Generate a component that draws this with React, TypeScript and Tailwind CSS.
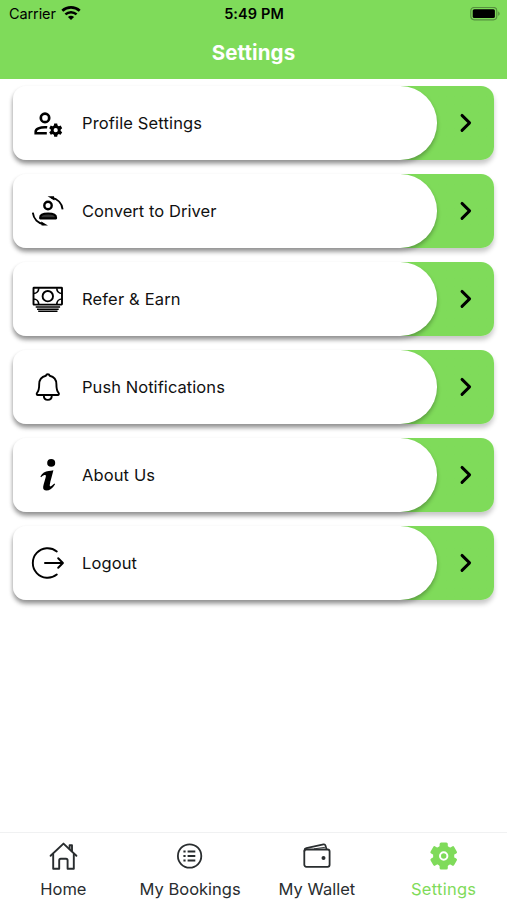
import type { ReactNode } from 'react';

const ProfileIcon = () => (
  <svg width="36" height="36" viewBox="0 0 36 36" fill="none" stroke="black">
    <circle cx="15" cy="12.9" r="4.2" strokeWidth="2.7" />
    <path d="M16.800 28.200H5.700v-1.700c0-2.700 4.300-4.300 9.300-4.300.8 0 1.500 0 2.200.1" strokeWidth="2.600" />
    <circle cx="25.700" cy="25.200" r="3.500" strokeWidth="2.800" />
    <g fill="black" stroke="none">
      <path d="M24.200 18.600h3l.5 3h-4zM24.200 31.800h3l.5-3h-4z" />
      <path d="M24.200 18.600h3l.5 3h-4zM24.200 31.800h3l.5-3h-4z" transform="rotate(60 25.700 25.200)" />
      <path d="M24.200 18.600h3l.5 3h-4zM24.200 31.800h3l.5-3h-4z" transform="rotate(120 25.700 25.200)" />
    </g>
  </svg>
);

const ConvertIcon = () => (
  <svg width="36" height="36" viewBox="0 0 36 36" fill="none" stroke="black">
    <circle cx="18" cy="12.5" r="3.7" strokeWidth="2.4" />
    <path d="M10.2 25.3v-.8c0-2.7 3.6-4 7.900-4s7.900 1.300 7.900 4v.8z" fill="#333" strokeWidth="2.2" strokeLinejoin="round" />
    <path d="M21.5 4.800C27.500 5.800 32 10 32.600 16.300M2.800 19.700C3.600 26 8 30.300 14 31.200" strokeWidth="1.900" />
    <path d="M17.600 3.200 24 3.300 24.400 7.400zM18 32.600l-6.400-.100-.4-4.100z" fill="black" stroke="none" />
  </svg>
);

const CashIcon = () => (
  <svg width="36" height="36" viewBox="0 0 36 36" fill="none" stroke="black">
    <rect x="3.500" y="6.800" width="28.500" height="16.800" rx="0.5" strokeWidth="1.900" />
    <circle cx="17.800" cy="15.200" r="5.200" strokeWidth="1.900" />
    <path d="M3.500 12.500c3 0 5.200-2.400 5.200-5.300M32 12.500c-3 0-5.200-2.400-5.200-5.300M3.500 18c3 0 5.200 2.400 5.200 5.300M32 18c-3 0-5.200 2.400-5.200 5.300" strokeWidth="1.700" />
    <path d="M5.700 26h24.400M7 28.200h21.700M8.200 30.300h19.300" strokeWidth="1.500" />
  </svg>
);

const BellIcon = () => (
  <svg width="36" height="36" viewBox="0 0 36 36" fill="none" stroke="black" strokeWidth="1.900" strokeLinejoin="round">
    <path d="M17.800 5.200c-1 0-1.700.6-1.900 1.500-4.500 1-6.700 4.300-6.700 8.600 0 5.200-.5 6.700-2 8.300-.9 1-.6 2.400.8 2.400h19.600c1.400 0 1.700-1.400.8-2.400-1.500-1.600-2-3.100-2-8.300 0-4.300-2.200-7.600-6.700-8.600-.2-.9-.9-1.500-1.900-1.500z" />
    <path d="M13.800 26.200c0 2.900 1.700 4.700 4 4.700s4-1.800 4-4.700" />
  </svg>
);

const InfoIcon = () => (
  <svg width="36" height="36" viewBox="0 0 36 36" fill="black">
    <ellipse cx="21.2" cy="5.900" rx="4" ry="3.800" />
    <path d="M10.400 19.600c1.800-3.500 4.800-5.200 8.200-5.500 1.600-.1 3.200-.3 4.800-.8-1 4.500-3 10.400-3.600 14.400-.2 1.300.2 1.900 1 1.600 1.300-.5 2.400-1.600 3.600-2.700l.7.6c-2.400 4-5.800 6.300-8.600 6.300-2.400 0-3.800-1.500-3.300-4 .6-3.300 2-6.900 2.600-9.700.4-1.700-.6-2.200-2-1.500-.9.4-1.800 1.100-2.700 2z" />
  </svg>
);

const LogoutIcon = () => (
  <svg width="36" height="36" viewBox="0 0 36 36" fill="none" stroke="black" strokeLinecap="round">
    <path d="M26.800 6.400A14.800 14.800 0 1 0 26.800 29.600" strokeWidth="1.900" />
    <path d="M15 18h17.800M28.200 13.300 32.900 18l-4.700 4.700" strokeWidth="2" strokeLinejoin="round" />
  </svg>
);

const HomeIcon = () => (
  <svg width="30" height="30" viewBox="0 0 30 30" fill="none" stroke="currentColor" strokeWidth="1.900" strokeLinejoin="round" strokeLinecap="round">
    <path d="M2.600 14.800 15.500 2.600 28.400 14.800" />
    <path d="M5.200 13.200v14.600h6v-8.400c0-1 .6-1.700 1.600-1.700h5.200c1 0 1.600.7 1.600 1.700v8.400h6.200V13.200" />
    <path d="M21.600 7.800V4.300h2.400V10" />
  </svg>
);

const BookingsIcon = () => (
  <svg width="30" height="30" viewBox="0 0 30 30" fill="none" stroke="currentColor">
    <circle cx="14.600" cy="15" r="11.700" strokeWidth="1.800" />
    <path d="M12.600 10.500h7.700M12.600 15h7.700M12.600 19.500h7.700" strokeWidth="1.800" />
    <path d="M8.400 10.500h2.200M8.400 15h2.200M8.400 19.500h2.200" strokeWidth="2.200" />
  </svg>
);

const WalletIcon = () => (
  <svg width="30" height="30" viewBox="0 0 30 30" fill="none" stroke="currentColor" strokeWidth="1.800" strokeLinejoin="round">
    <rect x="2.300" y="8.500" width="25.300" height="17.300" rx="2" />
    <path d="M2.400 10.500V9.300c0-1.200.7-1.900 1.900-2.200L21.500 3.400c1.100-.2 1.700.2 2 1.200l1.100 3.700" strokeWidth="1.600" />
    <path d="M12 7.900 23.500 6.200" strokeWidth="0.900" />
    <circle cx="21.500" cy="17" r="2" fill="currentColor" stroke="none" />
  </svg>
);

const GearIcon = () => (
  <svg width="30" height="30" viewBox="0 0 30 30" fill="currentColor">
    <circle cx="14.700" cy="15" r="10.600" />
    <rect x="10.600" y="1.400" width="8.200" height="27.200" rx="1.500" />
    <rect x="10.600" y="1.400" width="8.200" height="27.200" rx="1.500" transform="rotate(60 14.700 15)" />
    <rect x="10.600" y="1.400" width="8.200" height="27.200" rx="1.500" transform="rotate(120 14.700 15)" />
    <circle cx="14.700" cy="15" r="3.700" fill="none" stroke="white" strokeWidth="2" />
  </svg>
);

const StatusBar = () => (
  <div className="flex h-[27px] items-center text-black">
    <div className="flex flex-1 items-center pl-[9px]">
      <span className="text-[14.5px] tracking-[-0.1px]">Carrier</span>
      <svg className="ml-[5px]" width="20" height="15" viewBox="0 0 20 15" fill="none" stroke="black">
        <path d="M1.300 4.800C6.200.300 13.800.300 18.700 4.800" strokeWidth="2.700" />
        <path d="M4.400 8.400C7.600 5.400 12.400 5.400 15.600 8.400" strokeWidth="2.500" />
        <path d="M10 14 6.900 10.900c1.700-1.600 4.500-1.600 6.200 0z" fill="black" stroke="none" />
      </svg>
    </div>
    <span className="pr-[2px] text-[14.5px] font-semibold tracking-[0.1px]">5:49 PM</span>
    <div className="flex flex-1 justify-end pr-[6px]">
      <svg width="31" height="14" viewBox="0 0 31 14">
        <rect x="0.800" y="0.400" width="26" height="12.400" rx="3.500" fill="none" stroke="#56913f" strokeWidth="1.200" />
        <rect x="2.700" y="2.200" width="22.200" height="8.800" rx="1.600" fill="black" />
        <path d="M28.200 4.400c1.900.7 1.900 3.700 0 4.400z" fill="#56913f" />
      </svg>
    </div>
  </div>
);

type RowProps = { icon: ReactNode; label: string; spacing: string };

const SettingsRow = ({ icon, label, spacing }: RowProps) => (
  <button className="flex h-[73.5px] w-full items-center rounded-[13px] bg-linear-to-r from-white from-50% to-[#7fdb5a] to-50% text-left shadow-[0_4px_5px_rgba(0,0,0,0.22)]">
    <span className="flex h-full w-[423.5px] items-center rounded-l-[13px] rounded-r-[36.75px] bg-white pl-[17px] shadow-[0_3px_4px_rgba(0,0,0,0.28)]">
      <span className="flex size-9 items-center justify-center">{icon}</span>
      <span className={`ml-4 pt-[2px] text-[16.5px] text-[#111] ${spacing}`}>{label}</span>
    </span>
    <span className="flex flex-1 justify-center pl-px">
      <svg width="14" height="20" viewBox="0 0 14 20" fill="none" stroke="black" strokeWidth="2.900" strokeLinecap="round" strokeLinejoin="round">
        <path d="M3 2.400 10.600 9.900 3 17.400" />
      </svg>
    </span>
  </button>
);

const rows: RowProps[] = [
  { icon: <ProfileIcon />, label: 'Profile Settings', spacing: 'tracking-[0.14px]' },
  { icon: <ConvertIcon />, label: 'Convert to Driver', spacing: 'tracking-[0.06px]' },
  { icon: <CashIcon />, label: 'Refer & Earn', spacing: 'tracking-[0.16px]' },
  { icon: <BellIcon />, label: 'Push Notifications', spacing: 'tracking-[0.06px]' },
  { icon: <InfoIcon />, label: 'About Us', spacing: 'tracking-[0.12px]' },
  { icon: <LogoutIcon />, label: 'Logout', spacing: 'tracking-[0.12px]' },
];

const tabs = [
  { icon: <HomeIcon />, label: 'Home', color: 'text-[#292d2f]' },
  { icon: <BookingsIcon />, label: 'My Bookings', color: 'text-[#292d2f]' },
  { icon: <WalletIcon />, label: 'My Wallet', color: 'text-[#292d2f]' },
  { icon: <GearIcon />, label: 'Settings', color: 'text-[#7fdb5a] tracking-[0.25px]' },
];

const App = () => {
  return (
    <div className="flex h-[900px] w-[507px] flex-col overflow-hidden bg-white font-['Inter','Liberation_Sans',sans-serif]">
      <header className="h-[79px] bg-[#7fdb5a]">
        <StatusBar />
        <h1 className="flex h-[52px] items-center justify-center text-[20.5px] font-bold tracking-[0.1px] text-white">Settings</h1>
      </header>
      <main className="flex flex-1 flex-col gap-[14.5px] px-[13px] pt-[7px]">
        {rows.map((row) => (
          <SettingsRow key={row.label} {...row} />
        ))}
      </main>
      <nav className="grid h-[68px] grid-cols-4 border-t border-[#f0f1f2]">
        {tabs.map((tab) => (
          <button key={tab.label} className={`flex flex-col items-center pt-2 ${tab.color}`}>
            {tab.icon}
            <span className="mt-[6px] text-[16.5px] leading-6 whitespace-nowrap">{tab.label}</span>
          </button>
        ))}
      </nav>
    </div>
  );
};

export default App;
